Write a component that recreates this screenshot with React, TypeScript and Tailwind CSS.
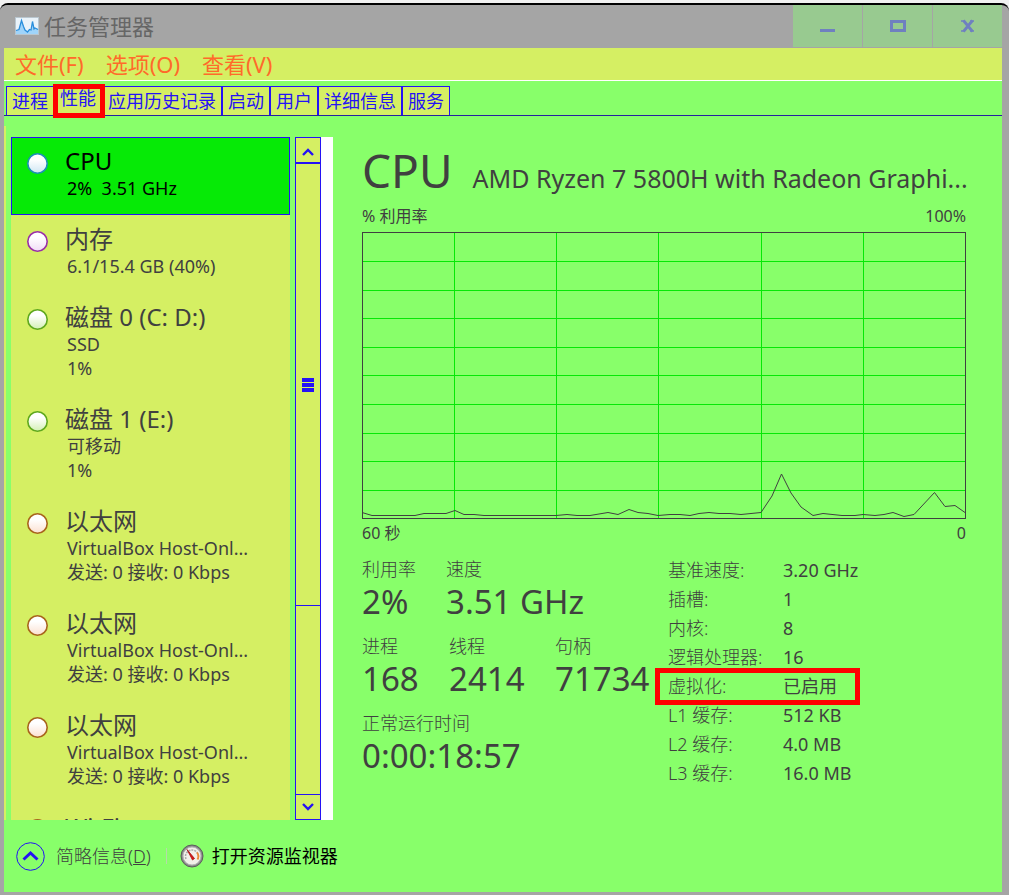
import React from 'react';

type Device = {
  name: string;
  lines: string[];
  ring: string;
  tint: string;
};

const BLUE = '#2412f5';

const devices: Device[] = [
  { name: 'CPU', lines: ['2%  3.51 GHz'], ring: '#1c8fb8', tint: '#cfe6f3' },
  { name: '内存', lines: ['6.1/15.4 GB (40%)'], ring: '#9a2fa8', tint: '#f0dcf6' },
  { name: '磁盘 0 (C: D:)', lines: ['SSD', '1%'], ring: '#5fa81e', tint: '#d3f0b4' },
  { name: '磁盘 1 (E:)', lines: ['可移动', '1%'], ring: '#5fa81e', tint: '#d3f0b4' },
  { name: '以太网', lines: ['VirtualBox Host-Onl...', '发送: 0 接收: 0 Kbps'], ring: '#a8641c', tint: '#fbe0d0' },
  { name: '以太网', lines: ['VirtualBox Host-Onl...', '发送: 0 接收: 0 Kbps'], ring: '#a8641c', tint: '#fbe0d0' },
  { name: '以太网', lines: ['VirtualBox Host-Onl...', '发送: 0 接收: 0 Kbps'], ring: '#a8641c', tint: '#fbe0d0' },
  { name: 'Wi-Fi', lines: [], ring: '#a8641c', tint: '#fbe0d0' },
];

const tabs = ['进程', '性能', '应用历史记录', '启动', '用户', '详细信息', '服务'];

const facts: [string, string][] = [
  ['基准速度:', '3.20 GHz'],
  ['插槽:', '1'],
  ['内核:', '8'],
  ['逻辑处理器:', '16'],
  ['虚拟化:', '已启用'],
  ['L1 缓存:', '512 KB'],
  ['L2 缓存:', '4.0 MB'],
  ['L3 缓存:', '16.0 MB'],
];

const usage =
  '0,280.5 10,283.5 53,283.5 62,281.5 84,281.5 93,278.5 102,282.5 112,282.5 122,283.5 194,283.5 205,282.5 215,283.5 228,283.5 246,280.5 256,282.5 267,277.5 276,280.5 286,281.5 296,283.5 308,282.5 318,282.5 328,283.5 337,281.5 347,280.5 357,281.5 368,281.5 379,282.5 399,280.5 410,264 419.5,242 429,261 439,275 451,283.5 461,281.5 480,283.5 493,283.5 501,282.5 513,283.5 522,282.5 531,280.5 542,284.5 552,282.5 572.5,260.5 583,274.5 593,273.5 603,280.5';

function TitleBar() {
  const button = 'flex w-[69px] items-center justify-center bg-[#98ca90]';
  return (
    <header className="flex h-[43px] shrink-0 bg-[#a5a5a5] pb-px">
      <div className="flex flex-1 items-center pl-[15px]">
        <svg width="24" height="18" viewBox="0 0 24 18" aria-hidden="true">
          <rect x=".5" y=".5" width="23" height="17" fill="#eaf3fa" stroke="#b9c6cf" />
          <path d="M1 13.500l3-1 2.500-9 2 6 1.500 3.500 2.500 2 2-2.500 1.500.5 1.500-8.500 1.500 7.500L20 11l3 1.500V17H1z" fill="#9fd4fa" />
          <path d="M1 13.500l3-1 2.500-9 2 6 1.500 3.500 2.500 2 2-2.500 1.500.5 1.500-8.500 1.500 7.500L20 11l3 1.500" fill="none" stroke="#2b8fdc" strokeWidth="1.300" />
        </svg>
        <h1 className="ml-[5px] text-[22px] leading-8 text-[#666666]">任务管理器</h1>
      </div>
      <div className="flex gap-px">
        <button type="button" aria-label="最小化" className={button}>
          <svg width="16" height="14" viewBox="0 0 16 14"><path d="M0 10h15v3H0z" fill="#6f80c0" /></svg>
        </button>
        <button type="button" aria-label="最大化" className={button}>
          <svg width="16" height="14" viewBox="0 0 16 14"><path d="M1.500 2.500h13v9h-13z" fill="none" stroke="#6f80c0" strokeWidth="3" /></svg>
        </button>
        <button type="button" aria-label="关闭" className={button}>
          <svg width="14" height="14" viewBox="0 0 14 14"><path d="M2.500 1.500l9 11M11.500 1.500l-9 11" stroke="#6f80c0" strokeWidth="2.800" /><path d="M0 2h4M9 2h4M0 12h4M9 12h4" stroke="#6f80c0" strokeWidth="1.500" /></svg>
        </button>
      </div>
    </header>
  );
}

function DeviceRow({ device, selected, id }: { device: Device; selected: boolean; id: number }) {
  return (
    <button
      type="button"
      className={
        selected
          ? 'flex w-full shrink-0 border border-[#2412f5] bg-[#06ea06] pt-2 pb-[14px] pl-[14px] text-left text-black'
          : 'flex w-full shrink-0 pt-[9px] pb-[15px] pl-[15px] text-left text-[#404040]'
      }
    >
      <svg className="mt-[6px] shrink-0" width="23" height="23" viewBox="0 0 23 23" aria-hidden="true">
        <defs>
          <linearGradient id={`tint${id}`} x1="0" y1="0" x2="0" y2="1">
            <stop offset="0.300" stopColor="#ffffff" />
            <stop offset="1" stopColor={device.tint} />
          </linearGradient>
        </defs>
        <circle cx="11.500" cy="11.500" r="9.700" fill={`url(#tint${id})`} stroke={device.ring} strokeWidth="1.600" />
      </svg>
      <span className="ml-4 min-w-0">
        <span className="block text-2xl leading-[30px]">{device.name}</span>
        {device.lines.map((line) => (
          <span key={line} className="block pl-0.5 text-lg leading-6 whitespace-pre">{line}</span>
        ))}
      </span>
    </button>
  );
}

function ScrollBar() {
  return (
    <div className="flex w-[38px] shrink-0 bg-white">
      <div className="flex w-[26px] flex-col border border-[#2412f5] bg-[#d5ef63]">
        <button type="button" aria-label="向上滚动" className="flex h-6 shrink-0 items-center justify-center pt-1">
          <svg width="12" height="8" viewBox="0 0 12 8"><path d="M1 7l5-5 5 5" fill="none" stroke={BLUE} strokeWidth="2.400" /></svg>
        </button>
        <div className="flex grow-[442] basis-0 flex-col items-center justify-center gap-px border-t-2 border-b border-[#2412f5]">
          <span className="h-1 w-3 bg-[#2412f5]" />
          <span className="h-1 w-3 bg-[#2412f5]" />
          <span className="h-1 w-3 bg-[#2412f5]" />
        </div>
        <div className="grow-[188] basis-0" />
        <button type="button" aria-label="向下滚动" className="flex h-[25px] shrink-0 items-center justify-center border-t border-[#2412f5]">
          <svg width="12" height="8" viewBox="0 0 12 8"><path d="M1 1l5 5 5-5" fill="none" stroke={BLUE} strokeWidth="2.400" /></svg>
        </button>
      </div>
    </div>
  );
}

function Stat({ label, value }: { label: string; value: string }) {
  return (
    <div>
      <dt className="text-lg leading-[26px] font-light">{label}</dt>
      <dd className="text-[33px] leading-10 whitespace-nowrap">{value}</dd>
    </div>
  );
}

function UsageChart() {
  return (
    <svg className="block h-[287px] w-full" viewBox="0 0 604 287" preserveAspectRatio="none" role="img" aria-label="CPU 利用率">
      <path
        d="M92.500 0V286M194.500 0V286M296.500 0V286M399.500 0V286M501.500 0V286M0 29.500H604M0 58.500H604M0 86.500H604M0 115.500H604M0 143.500H604M0 172.500H604M0 201.500H604M0 229.500H604M0 258.500H604"
        stroke="#06e806"
      />
      <polyline points={usage} fill="none" stroke="#404040" />
      <rect x=".5" y=".5" width="603" height="286" fill="none" stroke="#404040" />
    </svg>
  );
}

function CpuPanel() {
  return (
    <main className="min-w-0 flex-1 pt-[10px] pr-9 pl-[29px]">
      <div className="flex items-baseline gap-5">
        <h2 className="text-[46px] leading-[68px]">CPU</h2>
        <p className="min-w-0 flex-1 text-right text-[25px] whitespace-nowrap">AMD Ryzen 7 5800H with Radeon Graphi...</p>
      </div>
      <div className="flex justify-between pb-1 text-base leading-6">
        <span>% 利用率</span>
        <span>100%</span>
      </div>
      <UsageChart />
      <div className="flex justify-between pt-0.5 text-base leading-6">
        <span>60 秒</span>
        <span>0</span>
      </div>
      <div className="flex pt-[11px]">
        <div className="flex w-[306px] shrink-0 flex-col gap-[11px]">
          <dl className="grid grid-cols-[84px_1fr]">
            <Stat label="利用率" value="2%" />
            <Stat label="速度" value="3.51 GHz" />
          </dl>
          <dl className="grid grid-cols-[87px_106px_1fr]">
            <Stat label="进程" value="168" />
            <Stat label="线程" value="2414" />
            <Stat label="句柄" value="71734" />
          </dl>
          <dl>
            <Stat label="正常运行时间" value="0:00:18:57" />
          </dl>
        </div>
        <table className="h-fit text-lg leading-[29px]">
          <tbody>
            {facts.map(([label, value]) => (
              <tr key={label} className="relative">
                <th scope="row" className="w-[115px] p-0 text-left font-light whitespace-nowrap">
                  {label}
                  {label === '虚拟化:' && (
                    <span className="absolute -top-1 -left-[13px] h-[37px] w-[205px] border-[5px] border-[#ff0000]" />
                  )}
                </th>
                <td className="p-0 whitespace-nowrap">{value}</td>
              </tr>
            ))}
          </tbody>
        </table>
      </div>
    </main>
  );
}

export default function App() {
  return (
    <div className="h-screen bg-[#f0f0f0] pt-[3px] font-['Noto_Sans','Noto_Sans_CJK_SC',sans-serif] text-[#404040]">
      <div className="flex h-full flex-col overflow-hidden rounded-t-lg border-t-2 border-black bg-[#a5a5a5] pr-[7px] pb-[3px]">
        <TitleBar />
        <div className="ml-1 flex min-h-0 flex-1 flex-col bg-[#88ff6a]">
          <nav className="flex h-[33px] shrink-0 items-center gap-[22px] border-b border-white bg-[#d5ef63] pl-[11px] text-[22px] text-[#ff6a2a]">
            <button type="button">文件(F)</button>
            <button type="button">选项(O)</button>
            <button type="button">查看(V)</button>
          </nav>
          <div role="tablist" className="flex h-[35px] shrink-0 items-end border-b border-[#2420a0] pl-0.5 text-lg text-[#2412f5]">
            {tabs.map((tab) => (
              <button
                key={tab}
                type="button"
                role="tab"
                aria-selected={tab === '性能'}
                className={
                  tab === '性能'
                    ? 'relative h-[31px] border border-[#2412f5] bg-[#d5ef63] px-[5px] pb-1 leading-[26px]'
                    : 'h-[29px] border border-b-0 border-[#2412f5] bg-[#d5ef63] px-[5px] leading-7'
                }
              >
                {tab}
                {tab === '性能' && <span className="absolute -top-px -left-0.5 h-[34px] w-[52px] border-[5px] border-[#ff0000]" />}
              </button>
            ))}
          </div>
          <div className="flex min-h-0 flex-1 pt-[10px]">
            <aside className="flex w-[329px] shrink-0 border-l-2 border-[#d5ef63] pt-[11px]">
              <div className="ml-[5px] mr-[5px] flex min-w-0 flex-1 flex-col overflow-hidden bg-[#d5ef63]">
                {devices.map((device, index) => (
                  <DeviceRow key={index} id={index} device={device} selected={index === 0} />
                ))}
              </div>
              <ScrollBar />
            </aside>
            <CpuPanel />
          </div>
          <footer className="flex h-[72px] shrink-0 items-center pl-3 text-lg">
            <button type="button" className="flex items-center gap-[11px]">
              <svg width="29" height="29" viewBox="0 0 29 29" aria-hidden="true">
                <circle cx="14.500" cy="14.500" r="13.800" fill="none" stroke={BLUE} />
                <path d="M7.500 17.500l7-6.500 7 6.500" fill="none" stroke={BLUE} strokeWidth="3" />
              </svg>
              <span className="font-light">简略信息(<u>D</u>)</span>
            </button>
            <span className="mr-[13px] ml-[15px] h-4 w-px bg-[#b4dca8]" />
            <a href="#resource-monitor" className="flex items-center gap-2 text-black">
              <svg width="24" height="24" viewBox="0 0 24 24" aria-hidden="true">
                <circle cx="12" cy="12" r="11" fill="#8a8a8a" stroke="#5c5c5c" />
                <circle cx="12" cy="12" r="9" fill="#f2f0ea" stroke="#b8b8b8" />
                <path d="M6 15a6.500 6.500 0 1 1 12 0" fill="none" stroke="#a9a9a9" strokeWidth="1.500" strokeDasharray="2 1" />
                <path d="M17 8.500a6.500 6.500 0 0 1 .500 7" fill="none" stroke="#f08a3a" strokeWidth="1.800" />
                <path d="M7 5.500l7.500 9-2 1.500z" fill="#d81818" stroke="#a81010" strokeWidth=".8" />
              </svg>
              打开资源监视器
            </a>
          </footer>
        </div>
      </div>
    </div>
  );
}
